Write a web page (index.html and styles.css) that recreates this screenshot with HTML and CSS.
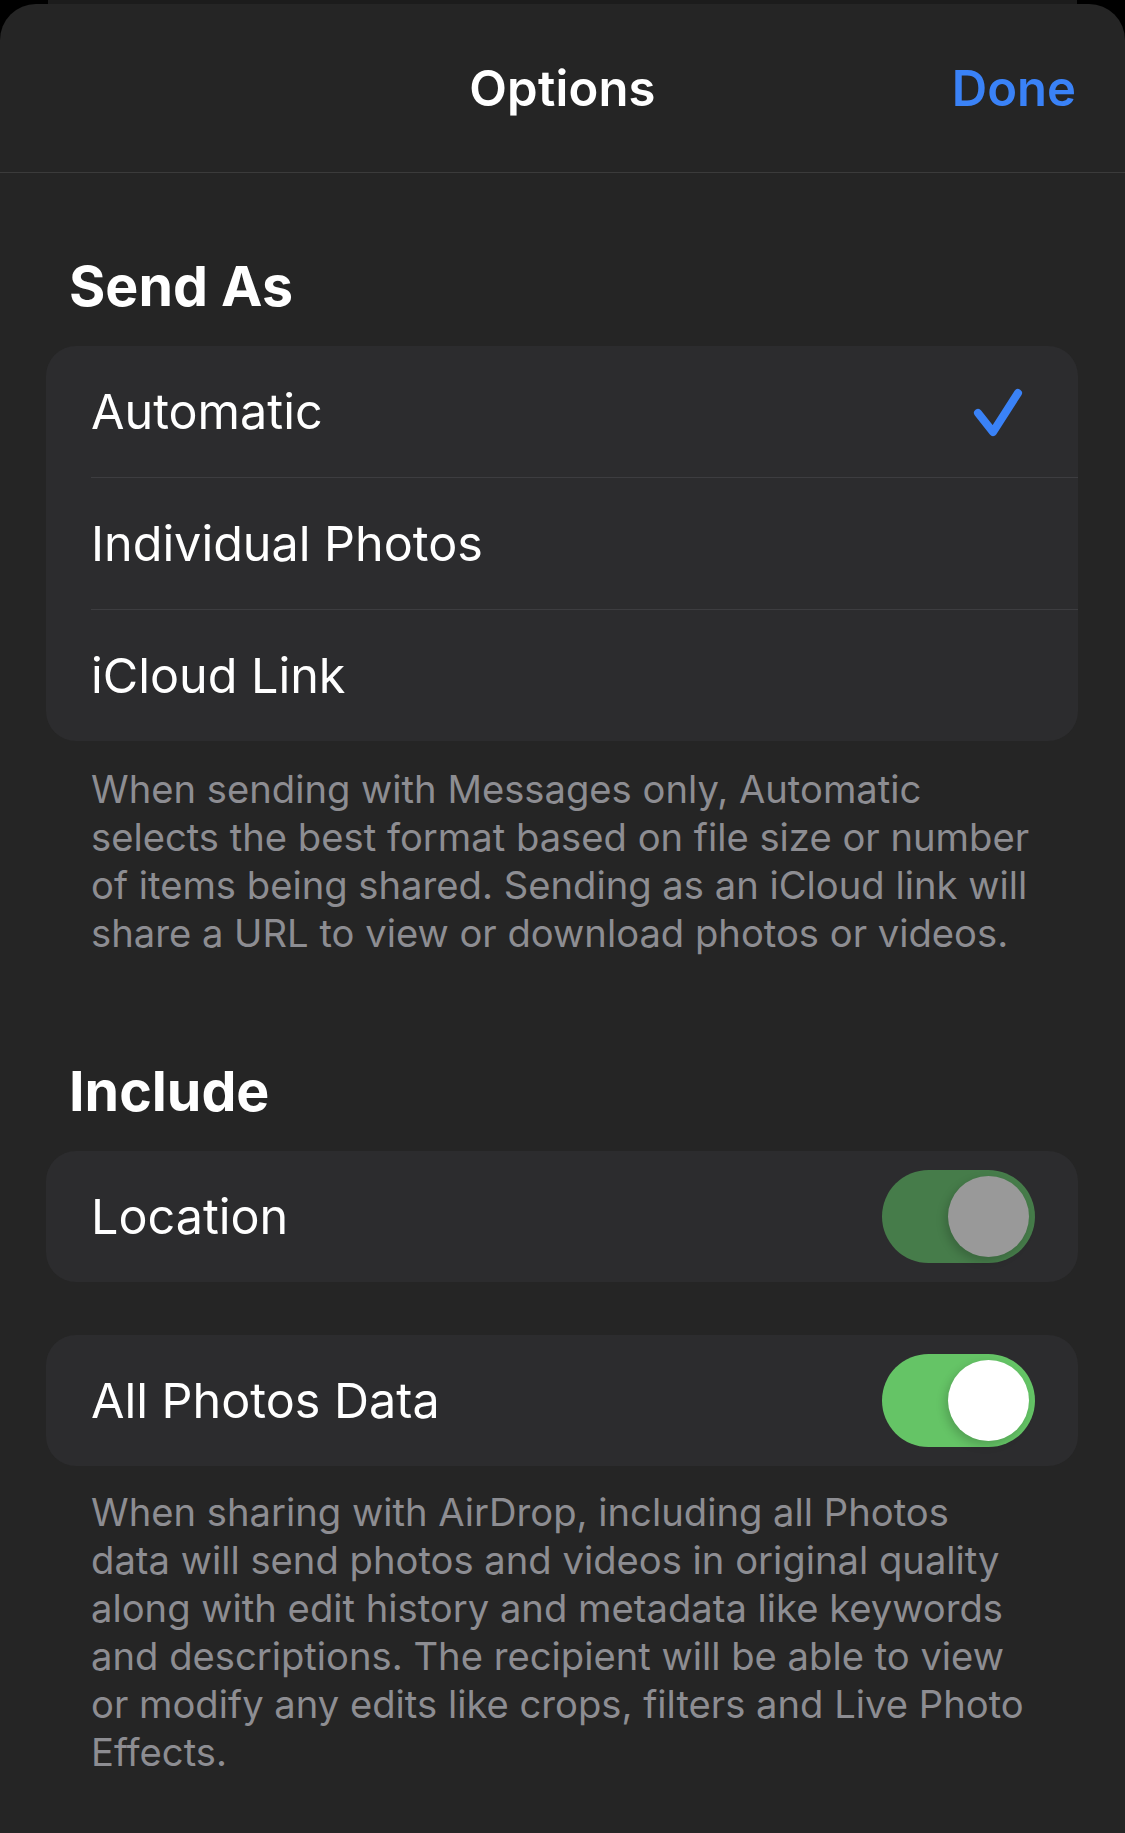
FILE: index.html
```html
<!DOCTYPE html>
<html lang="en">
<head>
    <meta charset="UTF-8">
    <meta name="viewport" content="width=device-width, initial-scale=1.0">
    <title>Options</title>
    <link rel="stylesheet" href="styles.css">
</head>
<body>
    <div class="behind"></div>
    <div class="sheet">
        <header class="nav">
            <span></span>
            <h1 class="nav-title">Options</h1>
            <a class="nav-done" href="#">Done</a>
        </header>

        <main class="content">
            <h2 class="section-title title-send">Send As</h2>
            <div class="group">
                <div class="option">
                    <span class="label">Automatic</span>
                    <svg class="check" width="52" height="52" viewBox="0 0 52 52">
                        <path d="M6 27 L21 46 L46 7" fill="none" stroke="#3a82f7" stroke-width="8" stroke-linecap="round" stroke-linejoin="round"/>
                    </svg>
                </div>
                <div class="option">
                    <span class="label">Individual Photos</span>
                </div>
                <div class="option">
                    <span class="label">iCloud Link</span>
                </div>
            </div>
            <p class="footer">When sending with Messages only, Automatic<br>selects the best format based on file size or number<br>of items being shared. Sending as an iCloud link will<br>share a URL to view or download photos or videos.</p>

            <h2 class="section-title title-include">Include</h2>
            <div class="group">
                <div class="option">
                    <span class="label">Location</span>
                    <span class="toggle toggle-dim"><span class="knob"></span></span>
                </div>
            </div>
            <div class="group group-spaced">
                <div class="option">
                    <span class="label">All Photos Data</span>
                    <span class="toggle"><span class="knob"></span></span>
                </div>
            </div>
            <p class="footer footer-last">When sharing with AirDrop, including all Photos<br>data will send photos and videos in original quality<br>along with edit history and metadata like keywords<br>and descriptions. The recipient will be able to view<br>or modify any edits like crops, filters and Live Photo<br>Effects.</p>
        </main>
    </div>
</body>
</html>
```

FILE: styles.css
```css
body {
    margin: 0;
    background-color: #000000;
    font-family: Inter, "Noto Sans", sans-serif;
    color: #ffffff;
}
.behind {
    height: 4px;
    margin: 0 48px;
    background-color: #1c1c1c;
}
.sheet {
    background-color: #252525;
    border-radius: 36px 36px 0 0;
    min-height: 1829px;
}
.nav {
    display: grid;
    grid-template-columns: 1fr auto 1fr;
    align-items: center;
    height: 168px;
    border-bottom: 1px solid #3b3b3b;
}
.nav-title {
    margin: 0;
    font-size: 49px;
    font-weight: 600;
    letter-spacing: 0.2px;
}
.nav-done {
    justify-self: end;
    margin-right: 49px;
    font-size: 49px;
    font-weight: 600;
    color: #3a82f7;
    text-decoration: none;
}
.content {
    padding: 0 47px 0 46px;
}
.section-title {
    margin: 0;
    padding-left: 23px;
    font-size: 55.5px;
    font-weight: 700;
    line-height: 58px;
}
.title-send {
    padding-top: 84px;
    margin-bottom: 31px;
}
.title-include {
    margin-top: 105px;
    margin-bottom: 31px;
}
.group {
    background-color: #2c2c2e;
    border-radius: 30px;
}
.group-spaced {
    margin-top: 53px;
}
.option {
    display: flex;
    align-items: center;
    height: 131px;
    margin-left: 45px;
    padding-right: 54px;
}
.option + .option {
    border-top: 1px solid #3d3d40;
}
.label {
    font-size: 48.5px;
    font-weight: 400;
}
.check {
    margin-left: auto;
    margin-top: 1px;
}
.footer {
    margin: 0;
    padding: 24px 45px 0 45px;
    font-size: 38.2px;
    line-height: 48px;
    color: #8d8d92;
    white-space: nowrap;
}
.footer-last {
    padding-top: 22px;
}
.toggle {
    position: relative;
    margin-left: auto;
    margin-right: -11px;
    width: 153px;
    height: 93px;
    border-radius: 47px;
    background-color: #65c466;
}
.toggle-dim {
    background-color: #467c4a;
}
.knob {
    position: absolute;
    top: 6px;
    right: 6px;
    width: 81px;
    height: 81px;
    border-radius: 50%;
    background-color: #ffffff;
    box-shadow: -3px 4px 10px rgba(0, 0, 0, 0.18);
}
.toggle-dim .knob {
    background-color: #999999;
}
```
